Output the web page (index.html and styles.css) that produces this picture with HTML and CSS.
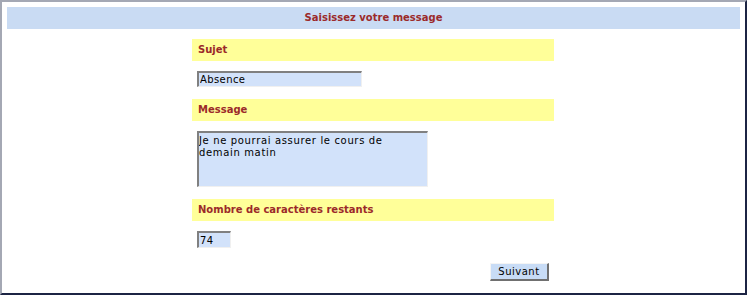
FILE: index.html
```html
<!DOCTYPE html>
<html lang="fr">
<head>
    <meta charset="UTF-8">
    <title>Saisissez votre message</title>
    <link rel="stylesheet" href="styles.css">
</head>
<body>
    <div class="frame">
        <div class="titre">Saisissez votre message</div>

        <form class="formulaire">
            <div class="label">Sujet</div>
            <div class="champ">
                <input type="text" class="saisie sujet" value="Absence">
            </div>

            <div class="label">Message</div>
            <div class="champ">
                <textarea class="saisie message">Je ne pourrai assurer le cours de demain matin</textarea>
            </div>

            <div class="label">Nombre de caractères restants</div>
            <div class="champ">
                <input type="text" class="saisie restants" value="74">
            </div>

            <div class="actions">
                <button type="button" class="bouton">Suivant</button>
            </div>
        </form>
    </div>
</body>
</html>
```

FILE: styles.css
```css
html, body {
    margin: 0;
    padding: 0;
    background: #ffffff;
}
body {
    font-family: "DejaVu Sans", Verdana, sans-serif;
    font-size: 10px;
}
.frame {
    box-sizing: border-box;
    width: 747px;
    height: 295px;
    border-style: solid;
    border-width: 2px 2px 2px 2px;
    border-color: #a4a8b4 #1c2444 #1c2444 #a4a8b4;
    padding: 5px 5px 0 5px;
}
.titre {
    height: 22px;
    line-height: 22px;
    width: 733px;
    background: #c9dbf3;
    color: #9b2a2a;
    font-weight: bold;
    text-align: center;
}
.formulaire {
    width: 362px;
    margin: 10px 0 0 185px;
}
.label {
    height: 22px;
    line-height: 22px;
    background: #ffff99;
    color: #9b2a2a;
    font-weight: bold;
    padding-left: 6px;
}
.champ {
    padding: 10px 0 12px 5px;
}
.saisie {
    display: block;
    box-sizing: border-box;
    margin: 0;
    background: #d2e2fa;
    color: #000;
    font-family: "DejaVu Sans", Verdana, sans-serif;
    font-size: 10px;
    letter-spacing: 0.4px;
    border-style: solid;
    border-width: 2px 1px 1px 2px;
    border-color: #808080 #f0f0f0 #f0f0f0 #808080;
    padding: 0 0 0 1px;
    outline: none;
}
.sujet {
    width: 165px;
    height: 16px;
}
.message {
    width: 231px;
    height: 56px;
    resize: none;
    overflow: hidden;
    line-height: 12px;
    letter-spacing: 0.65px;
    padding: 2px 0 0 0;
}
.restants {
    width: 34px;
    height: 17px;
}
.actions {
    display: flex;
    justify-content: flex-end;
    padding: 3px 5px 0 0;
}
.bouton {
    box-sizing: border-box;
    width: 59px;
    height: 18px;
    margin: 0;
    padding: 0;
    background: #c8dcf6;
    color: #000;
    font-family: "DejaVu Sans", Verdana, sans-serif;
    font-size: 10px;
    letter-spacing: 0.5px;
    border-style: solid;
    border-width: 1px 2px 2px 1px;
    border-color: #f4f4f4 #707070 #707070 #f4f4f4;
}
```
